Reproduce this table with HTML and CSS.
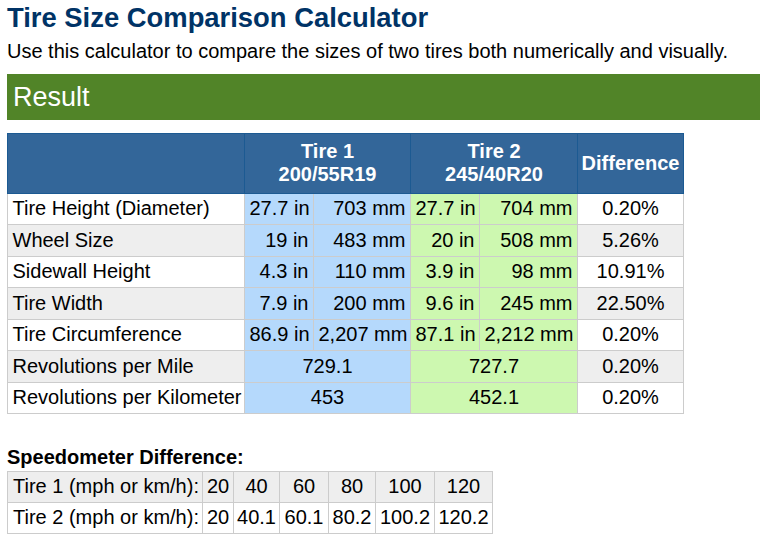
FILE: index.html
```html
<!DOCTYPE html>
<html lang="en">
<head>
<meta charset="utf-8">
<title>Tire Size Comparison Calculator</title>
<link rel="stylesheet" href="styles.css">
</head>
<body>
<div class="page">
  <h1 class="title">Tire Size Comparison Calculator</h1>
  <p class="intro">Use this calculator to compare the sizes of two tires both numerically and visually.</p>
  <h2 class="result-bar">Result</h2>

  <table class="cmp">
    <colgroup>
      <col class="c-label"><col class="c-in"><col class="c-mm"><col class="c-in"><col class="c-mm2"><col class="c-diff">
    </colgroup>
    <thead>
      <tr>
        <th></th>
        <th colspan="2">Tire 1<br>200/55R19</th>
        <th colspan="2">Tire 2<br>245/40R20</th>
        <th>Difference</th>
      </tr>
    </thead>
    <tbody>
      <tr class="w">
        <td class="lbl">Tire Height (Diameter)</td>
        <td class="t1 r">27.7 in</td><td class="t1 r">703 mm</td>
        <td class="t2 r">27.7 in</td><td class="t2 r">704 mm</td>
        <td class="c">0.20%</td>
      </tr>
      <tr class="g">
        <td class="lbl">Wheel Size</td>
        <td class="t1 r">19 in</td><td class="t1 r">483 mm</td>
        <td class="t2 r">20 in</td><td class="t2 r">508 mm</td>
        <td class="c">5.26%</td>
      </tr>
      <tr class="w">
        <td class="lbl">Sidewall Height</td>
        <td class="t1 r">4.3 in</td><td class="t1 r">110 mm</td>
        <td class="t2 r">3.9 in</td><td class="t2 r">98 mm</td>
        <td class="c">10.91%</td>
      </tr>
      <tr class="g">
        <td class="lbl">Tire Width</td>
        <td class="t1 r">7.9 in</td><td class="t1 r">200 mm</td>
        <td class="t2 r">9.6 in</td><td class="t2 r">245 mm</td>
        <td class="c">22.50%</td>
      </tr>
      <tr class="w">
        <td class="lbl">Tire Circumference</td>
        <td class="t1 r">86.9 in</td><td class="t1 r">2,207 mm</td>
        <td class="t2 r">87.1 in</td><td class="t2 r">2,212 mm</td>
        <td class="c">0.20%</td>
      </tr>
      <tr class="g">
        <td class="lbl">Revolutions per Mile</td>
        <td class="t1 c" colspan="2">729.1</td>
        <td class="t2 c" colspan="2">727.7</td>
        <td class="c">0.20%</td>
      </tr>
      <tr class="w">
        <td class="lbl">Revolutions per Kilometer</td>
        <td class="t1 c" colspan="2">453</td>
        <td class="t2 c" colspan="2">452.1</td>
        <td class="c">0.20%</td>
      </tr>
    </tbody>
  </table>

  <h3 class="speed-title">Speedometer Difference:</h3>
  <table class="speed">
    <colgroup>
      <col class="s0"><col class="s1"><col class="s2"><col class="s3"><col class="s4"><col class="s5"><col class="s6">
    </colgroup>
    <tr class="g">
      <td class="lbl">Tire 1 (mph or km/h):</td>
      <td>20</td><td>40</td><td>60</td><td>80</td><td>100</td><td>120</td>
    </tr>
    <tr class="w">
      <td class="lbl">Tire 2 (mph or km/h):</td>
      <td>20</td><td>40.1</td><td>60.1</td><td>80.2</td><td>100.2</td><td>120.2</td>
    </tr>
  </table>
</div>
</body>
</html>
```
FILE: styles.css
```css
html, body {
  margin: 0;
  padding: 0;
  background: #fff;
}
body {
  font-family: "Liberation Sans", Arial, sans-serif;
  color: #000;
}
.page {
  padding: 2px 0 0 7px;
}
.title {
  margin: 0;
  font-size: 27.4px;
  font-weight: bold;
  color: #003366;
  line-height: normal;
}
.intro {
  margin: 6px 0 0 0;
  font-size: 20px;
  line-height: 23px;
}
.result-bar {
  margin: 11px 0 0 0;
  background: #518428;
  color: #fff;
  font-size: 27px;
  font-weight: normal;
  line-height: 31px;
  padding: 7.5px 6px;
}
.cmp {
  margin-top: 13px;
  border-collapse: collapse;
  border-spacing: 0;
  table-layout: fixed;
  width: 676px;
  font-size: 20px;
  line-height: 23px;
}
.c-label { width: 237px; }
.c-in { width: 69px; }
.c-mm { width: 97px; }
.c-mm2 { width: 98px; }
.c-diff { width: 106px; }
.cmp th {
  background: #336699;
  color: #fff;
  font-weight: bold;
  border: 1px solid #1c5a92;
  padding: 6.3px 3px;
  text-align: center;
}
.cmp td {
  border: 1px solid #cccccc;
  padding: 3.75px 4.5px;
  white-space: nowrap;
}
tr.w { background: #fff; }
tr.g { background: #eeeeee; }
.cmp td.t1 { background: #b5d9fc; }
.cmp td.t2 { background: #cdf8b0; }
.lbl { text-align: left; }
.r { text-align: right; }
.c { text-align: center; }
.speed-title {
  margin: 32.4px 0 1.3px 0;
  font-size: 20px;
  line-height: 23px;
  font-weight: bold;
}
.speed {
  border-collapse: collapse;
  border-spacing: 0;
  table-layout: fixed;
  width: 486px;
  font-size: 20px;
  line-height: 23px;
}
.s0 { width: 195px; }
.s1 { width: 31px; }
.s2 { width: 46px; }
.s3 { width: 49px; }
.s4 { width: 47px; }
.s5 { width: 59px; }
.s6 { width: 58px; }
.speed td {
  border: 1px solid #cccccc;
  padding: 3.5px 0;
  text-align: center;
  white-space: nowrap;
}
.speed td.lbl {
  text-align: left;
  padding-left: 5px;
}
```
